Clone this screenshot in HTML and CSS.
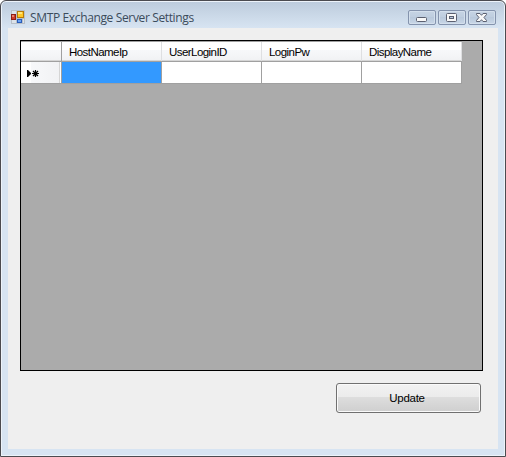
FILE: index.html
```
<!DOCTYPE html>
<html lang="en">
<head>
<meta charset="utf-8">
<title>SMTP Exchange Server Settings</title>
<link rel="stylesheet" href="styles.css">
</head>
<body>
<div class="window">
  <header class="titlebar">
    <svg class="app-icon" width="14" height="14" viewBox="0 0 14 14" shape-rendering="crispEdges">
      <path d="M0 0h14v14H0z" fill="#b7bfc8"/>
      <path d="M1 1h4v3H1zM1 10h4v3H1zM12 9h1v4h-1z" fill="#dce3ea"/>
      <path d="M0 4h5v6H0z" fill="#8e1d16"/><path d="M1 5h3v4H1z" fill="#cf3a29"/><path d="M1 5h2v2H1z" fill="#e8816b"/>
      <path d="M6 1h7v7H6z" fill="#b77a08"/><path d="M7 2h5v5H7z" fill="#ffc928"/><path d="M7 2h4v2H7z" fill="#ffe680"/>
      <path d="M6 9h5v4H6z" fill="#285dbb"/><path d="M7 10h3v2H7z" fill="#6ba2f2"/>
    </svg>
    <h1 class="title">SMTP Exchange Server Settings</h1>
    <div class="controls">
      <button class="control" aria-label="Minimize"><svg width="26" height="14" viewBox="0 0 26 14"><rect x="7.5" y="7.5" width="10" height="4" rx="1" fill="#f8f8f8" stroke="#5b6070"/></svg></button>
      <button class="control" aria-label="Maximize"><svg width="26" height="14" viewBox="0 0 26 14"><rect x="7.5" y="3.5" width="10" height="8" rx="1" fill="#f8f8f8" stroke="#5b6070"/><rect x="10.5" y="6.5" width="4" height="2" fill="#b9c9dc" stroke="#5b6070"/></svg></button>
      <button class="control" aria-label="Close"><svg width="26" height="14" viewBox="0 0 26 14"><path d="M7.5 3.5H11L12.5 5.3 14 3.5H17.5V4.6L15 7.5 17.5 10.4V11.5H14L12.5 9.7 11 11.5H7.5V10.4L10 7.5 7.5 4.6Z" fill="#f8f8f8" stroke="#5b6070" stroke-linejoin="round"/></svg></button>
    </div>
  </header>
  <main class="client">
    <div class="grid-view">
      <div class="row head">
        <div class="corner"></div>
        <div class="cell">HostNameIp</div>
        <div class="cell">UserLoginID</div>
        <div class="cell">LoginPw</div>
        <div class="cell">DisplayName</div>
      </div>
      <div class="row body">
        <div class="marker"><svg width="13" height="9" viewBox="0 0 13 9"><path d="M0 1v7h1L4 5V4L1 1z" fill="#000"/><path d="M8.5 1v7M5 4.5h7M6 2l5 5M11 2L6 7" stroke="#000" stroke-width="1.2" fill="none"/></svg></div>
        <div class="cell selected"></div>
        <div class="cell"></div>
        <div class="cell"></div>
        <div class="cell"></div>
      </div>
    </div>
    <button class="update">Update</button>
  </main>
</div>
</body>
</html>
```
FILE: styles.css
```
* { box-sizing: border-box; }
body { margin: 0; background: #fff; overflow: hidden; }
.window {
  width: 506px;
  height: 457px;
  padding: 0 6px 7px;
  border: 1px solid #4b4b50;
  border-radius: 6px 6px 0 0;
  background: linear-gradient(#bccbdc, #d7e4f2 27px, #d7e4f2);
  box-shadow: inset 0 0 0 1px #edf3fa;
  display: flex;
  flex-direction: column;
}
.titlebar {
  height: 27px;
  flex: none;
  display: flex;
  align-items: flex-start;
  padding: 0 3px 0 4px;
}
.app-icon { margin-top: 9px; }
.title {
  margin: 8px 0 0 5px;
  font: 12px/17px "Open Sans", sans-serif;
  letter-spacing: -0.36px;
  color: #3b4b5b;
  white-space: nowrap;
}
.controls { display: flex; gap: 2px; margin: 9px 0 0 auto; }
.control {
  width: 28px;
  height: 15px;
  padding: 0;
  border: 1px solid #8493ad;
  border-radius: 2px;
  background: linear-gradient(#c6d4e4, #becddf 50%, #b9c9dc 50%, #c9d7e7);
  box-shadow: inset 0 0 0 1px #d3dfec;
}
.control svg { display: block; margin-top: -1px; }
.client {
  margin: 0 1px;
  flex: 1;
  padding: 12px 15px 0 12px;
  background: #efefef;
  display: flex;
  flex-direction: column;
}
.grid-view {
  width: 463px;
  height: 331px;
  border: 1px solid #000;
  background: #ababab;
  font: 11.5px/14px "Liberation Sans", sans-serif;
  letter-spacing: -0.55px;
  color: #000;
}
.row { display: grid; grid-template-columns: 41px repeat(4, 100px); width: 441px; }
.head {
  height: 21px;
  border-top: 1px solid #a0a0a0;
  border-bottom: 1px solid #a0a0a0;
  background: linear-gradient(#fff 0 8px, #f7f8fa 8px, #f1f2f4 18px, #d5d5d5 18px);
}
.head .cell {
  padding: 3px 0 0 7px;
  border-right: 1px solid #dedfe1;
}
.corner { border-right: 1px solid #a0a0a0; }
.body { height: 22px; }
.body .cell { background: #fff; border: solid #a0a0a0; border-width: 0 1px 1px 0; }
.body .selected { background: #3399ff; }
.marker {
  padding: 7px 0 0 6px;
  border-right: 1px solid #a0a0a0;
  border-bottom: 1px solid #a0a0a0;
  background: linear-gradient(90deg, #fff 0 10px, #f7f8fa 10px, #f1f2f4 38px, #d5d5d5 38px 39px, #fff 39px);
}
.marker svg { display: block; }
.update {
  align-self: flex-end;
  width: 145px;
  height: 30px;
  margin: 12px 2px 0 0;
  padding: 0 3px 0 0;
  border: 1px solid #707070;
  border-radius: 3px;
  background: linear-gradient(#f2f2f2, #ebebeb 48%, #dddddd 48%, #cfcfcf);
  box-shadow: inset 0 0 0 1px #fafafa;
  font: 11.5px "Liberation Sans", sans-serif;
  letter-spacing: -0.3px;
  color: #000;
}
```
